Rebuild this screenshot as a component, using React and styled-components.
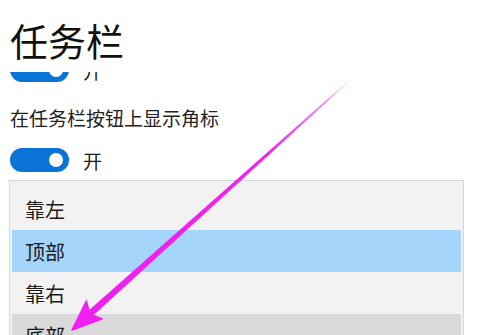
import React from 'react';
import styled, { createGlobalStyle } from 'styled-components';

const Global = createGlobalStyle`
  html, body {
    margin: 0;
    padding: 0;
    background: #fff;
  }
  body {
    font-family: "Noto Sans CJK SC", "Noto Sans", sans-serif;
    color: #1a1a1a;
  }
`;

const Page = styled.div`
  position: relative;
  width: 480px;
  height: 335px;
  overflow: hidden;
  background: #fff;
`;

const Header = styled.div`
  height: 72px;
  box-sizing: border-box;
  padding: 21px 0 0 10px;
`;

const Title = styled.h1`
  margin: 0;
  font-size: 38px;
  line-height: 1;
  font-weight: 400;
  color: #111;
`;

const Body = styled.div`
  padding-left: 10px;
  display: flex;
  flex-direction: column;
`;

// the scrolled-away row that peeks out below the header
const Clipped = styled.div`
  height: 10px;
  overflow: hidden;
  display: flex;
  align-items: flex-end;
`;

const ToggleRow = styled.div`
  display: flex;
  align-items: center;
  gap: 14px;
  margin-top: ${p => p.$top || 0}px;
`;

const Toggle = styled.div`
  width: 59px;
  height: 24px;
  border-radius: 12px;
  background: #0a74d6;
  display: flex;
  align-items: center;
  justify-content: flex-end;
  padding-right: 6px;
  box-sizing: border-box;
  flex-shrink: 0;

  &::after {
    content: '';
    width: 14px;
    height: 14px;
    border-radius: 50%;
    background: #fff;
  }
`;

const ToggleText = styled.span`
  font-size: 19px;
  line-height: 19px;
  color: #1a1a1a;
`;

const Label = styled.div`
  margin-top: 26px;
  font-size: 19px;
  line-height: 19px;
  color: #222;
`;

const List = styled.div`
  margin: 8px 0 0 -1px;
  width: 455px;
  box-sizing: border-box;
  border: 1px solid #d6d6d6;
  border-bottom: none;
  background: #f2f2f2;
  padding: 7px 2px 0;
`;

const Item = styled.div`
  height: 42px;
  display: flex;
  align-items: center;
  padding-left: 13px;
  font-size: 20px;
  color: #1a1a1a;
  background: ${p => (p.$selected ? '#a6d5fb' : p.$hover ? '#d9d9d9' : 'transparent')};
`;

const ArrowLayer = styled.svg`
  position: absolute;
  left: 0;
  top: 0;
  pointer-events: none;
`;

const Arrow = () => (
  <ArrowLayer width="480" height="335" viewBox="0 0 480 335">
    <defs>
      <linearGradient id="shaft" gradientUnits="userSpaceOnUse" x1="352" y1="78" x2="72" y2="330">
        <stop offset="0" stopColor="#ee22ee" stopOpacity="0" />
        <stop offset="0.1" stopColor="#e030e0" stopOpacity="0.6" />
        <stop offset="0.3" stopColor="#ee22ee" stopOpacity="1" />
        <stop offset="1" stopColor="#f020f0" stopOpacity="1" />
      </linearGradient>
    </defs>
    <polygon
      points="350.3,80.4 92.1,316.6 87.5,311.4 349.7,79.6"
      fill="url(#shaft)"
    />
    <polygon
      points="72,330 86.3,301 89.8,314 102.3,318.9"
      fill="#f020f0"
      stroke="#f020f0"
      strokeWidth="1.5"
      strokeLinejoin="round"
    />
  </ArrowLayer>
);

const items = [
  { label: '靠左' },
  { label: '顶部', selected: true },
  { label: '靠右' },
  { label: '底部', hover: true },
];

export default function App() {
  return (
    <Page>
      <Global />
      <Header>
        <Title>任务栏</Title>
      </Header>
      <Body>
        <Clipped>
          <ToggleRow>
            <Toggle />
            <ToggleText>开</ToggleText>
          </ToggleRow>
        </Clipped>
        <Label>在任务栏按钮上显示角标</Label>
        <ToggleRow $top={21}>
          <Toggle />
          <ToggleText>开</ToggleText>
        </ToggleRow>
        <List>
          {items.map(it => (
            <Item key={it.label} $selected={it.selected} $hover={it.hover}>
              {it.label}
            </Item>
          ))}
        </List>
      </Body>
      <Arrow />
    </Page>
  );
}
